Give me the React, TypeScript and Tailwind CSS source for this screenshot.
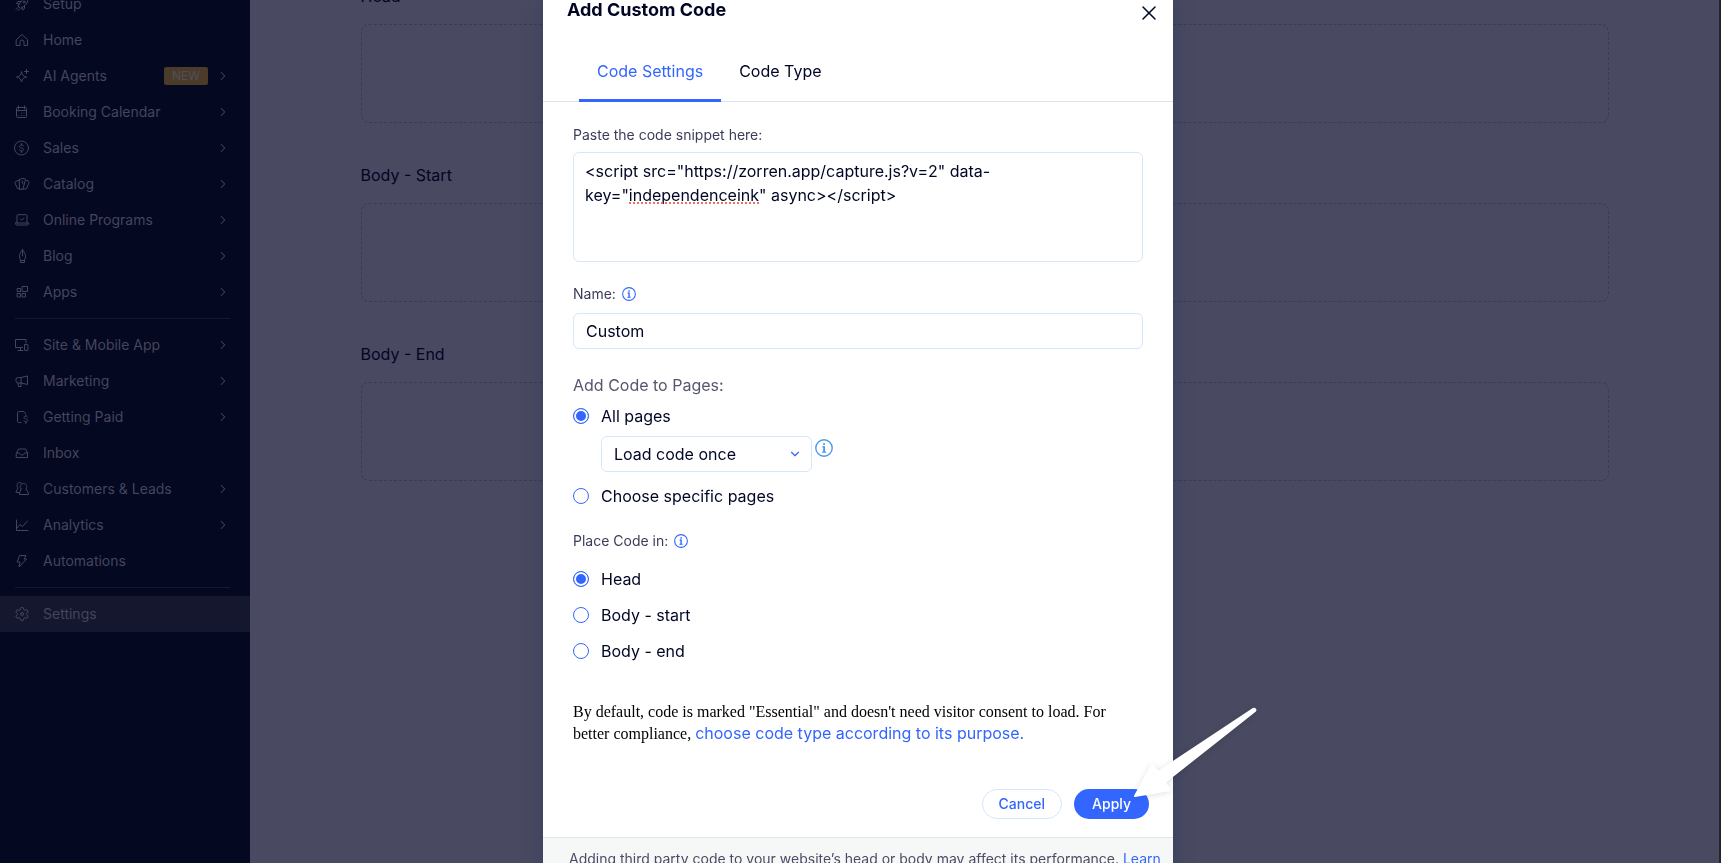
import { useState } from "react";
import type { ReactNode } from "react";
import { ChevronDown, ChevronRight, X } from "lucide-react";

type MenuItem = {
  name: string;
  icon: ReactNode;
  hasChildren?: boolean;
  badge?: string;
  active?: boolean;
};

const Icon = ({ children }: { children: ReactNode }) => (
  <svg
    viewBox="0 0 18 18"
    className="h-[18px] w-[18px] shrink-0"
    fill="none"
    stroke="currentColor"
    strokeWidth="1"
    strokeLinejoin="round"
    strokeLinecap="round"
    aria-hidden="true"
  >
    {children}
  </svg>
);

const menuGroups: MenuItem[][] = [
  [
    {
      name: "Setup",
      icon: (
        <Icon>
          <path d="M15 3c-4 0-6 1.5-8 5l-2 3 2.5 2.5 3-2c3-2 4.5-4.5 4.5-8.5z" />
          <path d="M8 6.5H5l-1.500 2 3 .5M11.500 10.500v3L9.500 15l-.5-3M5 12.500l-2 2M6.500 14 5 15.500" />
          <circle cx="11" cy="7" r="1" />
        </Icon>
      ),
    },
    {
      name: "Home",
      icon: (
        <Icon>
          <path d="M3.500 8.500 9 3.500l5.500 5v6H11V11a2 2 0 0 0-4 0v3.500H3.500z" />
        </Icon>
      ),
    },
    {
      name: "AI Agents",
      badge: "NEW",
      hasChildren: true,
      icon: (
        <Icon>
          <path d="M8.500 5C9 8 10.500 9.500 13.500 10c-3 .5-4.500 2-5 5-.5-3-2-4.500-5-5 3-.5 4.500-2 5-5z" />
          <path d="M13.500 2.500v4M11.500 4.500h4" />
        </Icon>
      ),
    },
    {
      name: "Booking Calendar",
      hasChildren: true,
      icon: (
        <Icon>
          <rect x="3.500" y="4.500" width="10" height="10" rx="1" />
          <path d="M3.500 7.500h10M5.500 3v3M11.500 3v3" />
          <path d="M8.500 10h.1M11 10h.1M6 12.500h.1M8.500 12.500h.1M11 12.500h.1" />
        </Icon>
      ),
    },
    {
      name: "Sales",
      hasChildren: true,
      icon: (
        <Icon>
          <circle cx="8.500" cy="9" r="7" />
          <path d="M10.500 7c-.3-.8-1-1-2-1s-2 .5-2 1.500S7.500 9 8.500 9s2 .5 2 1.500-1 1.500-2 1.500-1.800-.3-2-1M8.500 4.500V6M8.500 12v1.500" />
        </Icon>
      ),
    },
    {
      name: "Catalog",
      hasChildren: true,
      icon: (
        <Icon>
          <path d="M6.500 4.500 9 3.500c1-.3 3.500-.3 3.500 1L10 14l-3 .5z" />
          <path d="M6.500 5l-4 1.500c-.8.300-.8 1-.5 1.500l2.500 5.500 2.500.5M12.500 5l3 1.200c.7.300.7 1 .5 1.500l-2.500 6-3.500.5M9 6l1 3" />
        </Icon>
      ),
    },
    {
      name: "Online Programs",
      hasChildren: true,
      icon: (
        <Icon>
          <path d="M4 12V4.500c0-.5.300-.8.800-.8h8.400c.5 0 .8.300.8.800V12" />
          <path d="M2.500 12h13v1c0 .5-.5 1-1 1h-11c-.5 0-1-.5-1-1zM7.500 8l1.200 1.200L11 7" />
        </Icon>
      ),
    },
    {
      name: "Blog",
      hasChildren: true,
      icon: (
        <Icon>
          <path d="M9.500 2.500C8 5 6 7.500 6.500 10l1 3.500h4l1-3.500c.5-2.500-1.500-5-3-7.500zM9.500 4v5M7.500 13.500v2h4v-2" />
        </Icon>
      ),
    },
    {
      name: "Apps",
      hasChildren: true,
      icon: (
        <Icon>
          <rect x="9.500" y="3.500" width="5" height="5" />
          <rect x="4.500" y="5.500" width="3" height="3" />
          <rect x="4.500" y="10.500" width="3" height="3.500" />
          <rect x="9.500" y="10.500" width="3" height="3.500" />
        </Icon>
      ),
    },
  ],
  [
    {
      name: "Site & Mobile App",
      hasChildren: true,
      icon: (
        <Icon>
          <path d="M9.500 11.500h-7v-8H13V7M7.500 11.500v3M5 14.500h5" />
          <rect x="11.500" y="8.500" width="3.500" height="6" rx=".5" />
        </Icon>
      ),
    },
    {
      name: "Marketing",
      hasChildren: true,
      icon: (
        <Icon>
          <path d="M8 5.500 14.500 4v8.500L8 11H5a2 2 0 0 1-2-2V7.500a2 2 0 0 1 2-2zM8 5.500V11M5 11l.5 3.500H8V11" />
        </Icon>
      ),
    },
    {
      name: "Getting Paid",
      hasChildren: true,
      icon: (
        <Icon>
          <path d="M8 14.500H6c-.8 0-1.500-.5-1.500-1.500V5c0-1 .5-1.500 1.500-1.500h5l1.500 2" />
          <path d="M14.500 9c-.3-.6-1-.9-1.700-.9-1 0-1.800.5-1.800 1.400s.8 1.300 1.800 1.500c1 .2 1.900.6 1.900 1.500s-.9 1.400-1.900 1.400c-.9 0-1.600-.4-1.900-1M12.800 6.800v1.300M12.800 13.900v1.500" />
        </Icon>
      ),
    },
    {
      name: "Inbox",
      icon: (
        <Icon>
          <path d="M3.500 9l2-4h7l2 4v4.500h-11zM3.500 9h3c.3 1.300 1.200 2 2.500 2s2.200-.7 2.500-2h3" />
        </Icon>
      ),
    },
    {
      name: "Customers & Leads",
      hasChildren: true,
      icon: (
        <Icon>
          <path d="M8 9C6.500 7 7.500 3.500 10.500 3.500S14.500 7 13 9c0 1.500 2.500 2 2.500 5.500h-9C6.500 11 8 10.500 8 9z" />
          <path d="M8.500 3C6.500 1.800 4 3 4 5.500 4 6.500 4.500 7.500 5 8c-.5 1.500-2 2-2 4.500h3.500" />
        </Icon>
      ),
    },
    {
      name: "Analytics",
      hasChildren: true,
      icon: (
        <Icon>
          <path d="M3.500 4v10.500H15M3.500 12.500l3.500-4 2.500 2 5-5.500" />
        </Icon>
      ),
    },
    {
      name: "Automations",
      icon: (
        <Icon>
          <path d="M7 3.500h6L11 7h2.500L6 15l1-5H4.500z" />
        </Icon>
      ),
    },
  ],
  [
    {
      name: "Settings",
      active: true,
      icon: (
        <Icon>
          <path d="M7.200 4.600 7.800 2.600h2.400l.6 2 1.100.7 2-.6 1.300 2.200-1.500 1.500v1.200l1.500 1.500-1.300 2.200-2-.6-1.100.7-.6 2H7.800l-.6-2-1.100-.7-2 .6-1.300-2.200 1.500-1.500V8.400L2.800 6.900l1.300-2.200 2 .6z" />
          <circle cx="9" cy="9" r="1.500" />
        </Icon>
      ),
    },
  ],
];

const codeSections = ["Head", "Body - Start", "Body - End"];

const placements = ["Head", "Body - start", "Body - end"];

const InfoIcon = ({ large = false }: { large?: boolean }) => (
  <svg
    viewBox="0 0 16 16"
    className={large ? "h-[18px] w-[18px] text-[#4b97e8]" : "h-[14px] w-[14px] text-[#3366ff]"}
    fill="none"
    stroke="currentColor"
    strokeWidth="1.2"
    aria-hidden="true"
  >
    <circle cx="8" cy="8" r="7.300" />
    <path d="M6.300 11.700h3.600M6.500 7h1.600" />
    <path d="M8.100 6.400v5.200" strokeWidth="1.600" />
    <path d="M7.300 4.500h1.600" strokeWidth="1.600" />
  </svg>
);

const Radio = ({
  name,
  label,
  checked,
  onChange,
}: {
  name: string;
  label: string;
  checked: boolean;
  onChange: () => void;
}) => (
  <label className="flex items-center gap-3 text-base leading-6 text-[#000624]">
    <input
      type="radio"
      name={name}
      checked={checked}
      onChange={onChange}
      className="h-4 w-4 appearance-none rounded-full border border-[#3366ff] bg-white checked:bg-[#3366ff] checked:shadow-[inset_0_0_0_2px_white]"
    />
    {label}
  </label>
);

const Sidebar = () => (
  <aside className="w-[250px] shrink-0 bg-[#040820] text-[#44455e]">
    <nav className="-mt-3.5">
      {menuGroups.map((group, index) => (
        <div key={group[0].name}>
          {index > 0 && <hr className="my-2 mr-5 ml-[15px] border-[#17182f]" />}
          <ul>
            {group.map((item) => (
              <li key={item.name}>
                <a
                  href="#"
                  className={`flex h-9 items-center pr-5 pl-[13px] ${item.active ? "bg-[#15172f]" : ""}`}
                >
                  {item.icon}
                  <span className="ml-3 flex-1 text-sm">{item.name}</span>
                  {item.badge && (
                    <span className="mr-2 rounded-xs bg-[#4b3c29] px-2 text-xs leading-[18px] text-[#4f4e60]">
                      {item.badge}
                    </span>
                  )}
                  {item.hasChildren && <ChevronRight className="h-3.5 w-3.5" strokeWidth={1.75} />}
                </a>
              </li>
            ))}
          </ul>
        </div>
      ))}
    </nav>
  </aside>
);

const CustomCodeModal = () => {
  const [tab, setTab] = useState("Code Settings");
  const [snippet, setSnippet] = useState(
    '<script src="https://zorren.app/capture.js?v=2" data-key="independenceink" async></script>'
  );
  const [name, setName] = useState("Custom");
  const [pages, setPages] = useState("all");
  const [placement, setPlacement] = useState("Head");

  return (
    <div
      role="dialog"
      aria-labelledby="modal-title"
      className="relative w-[630px] bg-white text-[#000624] shadow-[0_0_18px_rgba(22,45,100,0.35)]"
    >
      <header className="flex items-start justify-between pr-3 pl-6">
        <h1 id="modal-title" className="text-lg leading-5 font-bold">
          Add Custom Code
        </h1>
        <button type="button" aria-label="Close" className="pt-px">
          <X className="h-6 w-6" strokeWidth={1.5} />
        </button>
      </header>

      {/* Tabs */}
      <div role="tablist" className="mt-[19px] flex border-b border-[#dfe3eb] px-9">
        {["Code Settings", "Code Type"].map((item) => (
          <button
            key={item}
            type="button"
            role="tab"
            aria-selected={tab === item}
            onClick={() => setTab(item)}
            className={`-mb-px border-b-3 px-[18px] pt-[15px] pb-4 text-base leading-6 ${
              tab === item ? "border-[#3366ff] text-[#3366ff]" : "border-transparent"
            }`}
          >
            {item}
          </button>
        ))}
      </div>

      <form className="px-[30px] pt-[23px]" onSubmit={(e) => e.preventDefault()}>
        <label htmlFor="snippet" className="block text-sm leading-5 text-[#3b3d58]">
          Paste the code snippet here:
        </label>
        <div className="relative mt-[7px]">
          <textarea
            id="snippet"
            spellCheck={false}
            value={snippet}
            onChange={(e) => setSnippet(e.target.value)}
            className="block h-[110px] w-full resize-none rounded-md border border-[#d6e6fe] px-[11px] py-1.5 text-base leading-6"
          />
          {/* Spelling mark under the site key */}
          <span className="absolute top-[50px] left-14 w-[130px] border-b-2 border-dotted border-[#f0705f]" />
        </div>

        <div className="mt-[22px] flex items-center gap-1.5">
          <label htmlFor="name" className="text-sm leading-5 text-[#3b3d58]">
            Name:
          </label>
          <InfoIcon />
        </div>
        <input
          id="name"
          type="text"
          value={name}
          onChange={(e) => setName(e.target.value)}
          className="mt-[9px] block h-9 w-full rounded-md border border-[#d6e6fe] px-3 text-base"
        />

        <fieldset className="mt-6">
          <legend className="text-base leading-6 text-[#55576f]">Add Code to Pages:</legend>
          <div className="mt-[7px]">
            <Radio
              name="pages"
              label="All pages"
              checked={pages === "all"}
              onChange={() => setPages("all")}
            />
          </div>
          <div className="mt-2 ml-7 flex items-start gap-[3px]">
            <div className="relative">
              <select
                aria-label="Load frequency"
                className="h-9 w-[211px] appearance-none rounded-md border border-[#d6e6fe] bg-white px-3 text-base"
              >
                <option>Load code once</option>
                <option>Load code on each new page</option>
              </select>
              <ChevronDown
                className="pointer-events-none absolute top-[11px] right-2.5 h-3.5 w-3.5 text-[#3366ff]"
                strokeWidth={2}
              />
            </div>
            <span className="pt-[3px]">
              <InfoIcon large />
            </span>
          </div>
          <div className="mt-3">
            <Radio
              name="pages"
              label="Choose specific pages"
              checked={pages === "specific"}
              onChange={() => setPages("specific")}
            />
          </div>
        </fieldset>

        <fieldset className="mt-[23px]">
          <legend className="flex items-center gap-1.5 text-sm leading-5 text-[#3b3d58]">
            Place Code in:
            <InfoIcon />
          </legend>
          <div className="mt-4 flex flex-col gap-3">
            {placements.map((item) => (
              <Radio
                key={item}
                name="placement"
                label={item}
                checked={placement === item}
                onChange={() => setPlacement(item)}
              />
            ))}
          </div>
        </fieldset>

        <p className="mt-[38px] font-['Liberation_Serif',serif] text-base leading-[22px] text-black">
          By default, code is marked "Essential" and doesn't need visitor consent to load. For
          better compliance,{" "}
          <a href="#" className="inline-block font-[Inter,sans-serif] leading-5 text-[#3366ff]">
            choose code type according to its purpose.
          </a>
        </p>
      </form>

      <div className="mt-11 mb-[18px] flex justify-end gap-3 pr-6">
        <button
          type="button"
          className="h-[30px] rounded-full border border-[#d6e6fe] px-4 text-sm font-medium text-[#3366ff]"
        >
          Cancel
        </button>
        <button
          type="button"
          className="h-[30px] rounded-full bg-[#3366ff] px-[18px] text-sm font-medium text-white"
        >
          Apply
        </button>
      </div>

      <footer className="border-t border-[#dfe5e8] bg-[#f6f8f8] pt-[11px] pr-3 pb-4 pl-[26px] text-sm leading-5 text-[#4a4c66]">
        Adding third party code to your website’s head or body may affect its performance.{" "}
        <a href="#" className="text-[#3366ff]">
          Learn more
        </a>
      </footer>

      {/* Arrow pointing at Apply */}
      <svg
        viewBox="0 0 130 96"
        className="pointer-events-none absolute top-[705px] left-[588px] h-24 w-[130px] drop-shadow-[0_1px_3px_rgba(0,0,0,0.12)]"
        fill="white"
        stroke="white"
        strokeWidth="2"
        strokeLinejoin="round"
        aria-hidden="true"
      >
        <path d="M4 91 21 60 27 67 122 4c2-1 3 1 2 2L34 77 39 85z" />
      </svg>
    </div>
  );
};

const App = () => {
  return (
    <div className="flex h-screen overflow-hidden border-r-2 border-[#22262b] bg-[#494a61] font-[Inter,sans-serif]">
      <Sidebar />

      <main className="flex-1">
        <div className="mx-auto -mt-4 flex max-w-[1248px] flex-col gap-10">
          {codeSections.map((section) => (
            <section key={section}>
              <h2 className="text-base leading-6 text-[#020424]">{section}</h2>
              <div className="mt-4 h-[99px] rounded-lg border border-dashed border-[#3a3b54]" />
            </section>
          ))}
        </div>
      </main>

      <div className="fixed inset-0 flex items-start justify-center overflow-hidden pr-[5px]">
        <CustomCodeModal />
      </div>
    </div>
  );
};

export default App;
